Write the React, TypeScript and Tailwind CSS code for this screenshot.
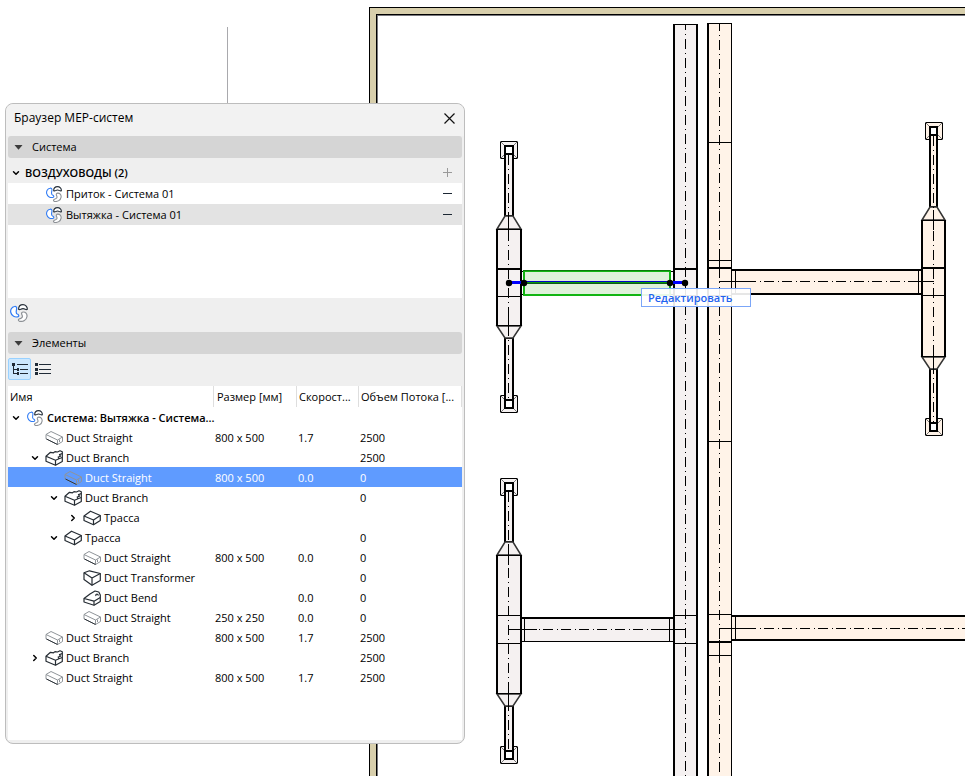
import React, { useState } from 'react';
import { ChevronDown, ChevronRight } from 'lucide-react';

type IconKind = 'fan' | 'straight' | 'branch' | 'route' | 'transformer' | 'bend';

interface TreeRow {
  id: number;
  level: number;
  icon: IconKind;
  name: string;
  state?: 'open' | 'closed';
  size?: string;
  speed?: string;
  flow?: string;
}

const rows: TreeRow[] = [
  { id: 1, level: 0, icon: 'fan', name: 'Система: Вытяжка - Система...', state: 'open' },
  { id: 2, level: 1, icon: 'straight', name: 'Duct Straight', size: '800 x 500', speed: '1.7', flow: '2500' },
  { id: 3, level: 1, icon: 'branch', name: 'Duct Branch', state: 'open', flow: '2500' },
  { id: 4, level: 2, icon: 'straight', name: 'Duct Straight', size: '800 x 500', speed: '0.0', flow: '0' },
  { id: 5, level: 2, icon: 'branch', name: 'Duct Branch', state: 'open', flow: '0' },
  { id: 6, level: 3, icon: 'route', name: 'Трасса', state: 'closed' },
  { id: 7, level: 2, icon: 'route', name: 'Трасса', state: 'open', flow: '0' },
  { id: 8, level: 3, icon: 'straight', name: 'Duct Straight', size: '800 x 500', speed: '0.0', flow: '0' },
  { id: 9, level: 3, icon: 'transformer', name: 'Duct Transformer', flow: '0' },
  { id: 10, level: 3, icon: 'bend', name: 'Duct Bend', speed: '0.0', flow: '0' },
  { id: 11, level: 3, icon: 'straight', name: 'Duct Straight', size: '250 x 250', speed: '0.0', flow: '0' },
  { id: 12, level: 1, icon: 'straight', name: 'Duct Straight', size: '800 x 500', speed: '1.7', flow: '2500' },
  { id: 13, level: 1, icon: 'branch', name: 'Duct Branch', state: 'closed', flow: '2500' },
  { id: 14, level: 1, icon: 'straight', name: 'Duct Straight', size: '800 x 500', speed: '1.7', flow: '2500' },
];

const indent = ['pl-[3px]', 'pl-[22px]', 'pl-[41px]', 'pl-[60px]'];

const FanIcon: React.FC<{ className?: string }> = ({ className = 'w-4 h-4' }) => (
  <svg viewBox="0 0 18 18" className={`shrink-0 ${className}`} fill="#fff" strokeWidth="1.2">
    <path stroke="#2f7bf5" d="M4.500 2.500C1.500 3 .2 6 .8 8.500C1.600 12 5 13.800 8.300 12.600C9.300 11.700 8.600 10.500 7.200 10C5 9 6.900 6 6.700 3.800C6.300 2.500 5.500 2.200 4.500 2.500Z" />
    <path stroke="#27303a" d="M8.600 5.300C8.600 2.200 10.500 .7 13 .7C15.600 .7 17.500 3 17.300 5.300C15.600 6.200 15.300 4.600 13 4.600C10.700 4.600 10.500 6.200 8.600 5.300Z" />
    <path stroke="#8d9196" d="M13 8C15.500 7.800 17.300 9.800 17 12.500C16.500 16 13 18 9.500 17.300C8 16.800 8 15.300 9.500 14.800C12 14.200 13 13 12 11C11.200 9.500 11.500 8.300 13 8Z" />
  </svg>
);

const DuctIcon: React.FC<{ kind: IconKind; selected: boolean }> = ({ kind, selected }) => {
  if (kind === 'fan') return <FanIcon className="w-[18px] h-4" />;
  if (kind === 'straight') {
    return (
      <svg viewBox="0 0 18 16" className="w-[18px] h-4 shrink-0" fill="none" stroke="#8f9499" strokeLinejoin="round">
        <path fill={selected ? 'none' : '#fff'} d="M1 4.500L6 1.500L17.500 7V11.500L12.500 14.500L1 8.800Z" />
        <path d="M1 4.500L12.500 10L17.500 7M12.500 10V14.500" />
        <path d="M14.500 9.500V12" />
        <path stroke="#30363c" d="M1.500 9L12.500 14.500" />
      </svg>
    );
  }
  return (
    <svg viewBox="0 0 18 16" className="w-[18px] h-4 shrink-0" fill="#fff" stroke="#252c33" strokeWidth="1.2" strokeLinejoin="round">
      {kind === 'route' && (
        <>
          <path d="M1 6L7.500 1.200L17.300 5.500V10.500L10.500 14.800L1 10.500Z" />
          <path fill="none" d="M1 6L10.500 10L17.300 5.500M10.500 10V14.800" />
        </>
      )}
      {kind === 'branch' && (
        <>
          <path d="M1 6.300L5.500 2.300L8.500 2.800L10 1.600L12.500 2L15 .8L17.300 1.800V11.500L10.500 15.200L1 11.200Z" />
          <path fill="none" d="M1 6.300L10.500 10.300V15.200M10.500 10.300L14 8.800L13.200 7L15.500 6.200L14.500 4.600L17.300 3.500M14 8.800L17.300 7.500" />
        </>
      )}
      {kind === 'transformer' && (
        <>
          <path d="M1 2.800L6.500 .8L17.300 3.500V10.500L9 15.300L1 9.500Z" />
          <path fill="none" d="M1 2.800L9 8L17.300 3.500M9 8V15.300" />
        </>
      )}
      {kind === 'bend' && (
        <>
          <path d="M1 8.500L7 4L12 1L15.800 2L17.300 5V11.500L11 15.200L1 12Z" />
          <path fill="none" d="M1 8.500L11 11.200L17.300 7.500M11 11.200V15.200M13 6C12.200 4 14.500 3.500 15.500 5.500" />
        </>
      )}
    </svg>
  );
};

interface SectionBarProps {
  title: string;
  open: boolean;
  onToggle: () => void;
}

const SectionBar: React.FC<SectionBarProps> = ({ title, open, onToggle }) => (
  <button
    onClick={onToggle}
    aria-expanded={open}
    className="flex h-[22px] w-full shrink-0 items-center gap-[9px] rounded-[3px] bg-[#d5d5d5] pl-[6px] text-left"
  >
    <svg viewBox="0 0 9 5" className={`h-[5px] w-[9px] ${open ? '' : '-rotate-90'}`} fill="#3c3c3c">
      <path d="M.5 0H8.500L4.500 4.800Z" />
    </svg>
    {title}
  </button>
);

/* Vertical tee body with two tapers, necks and square diffusers */
interface RiserProps {
  x: number;
  width?: number;
  fill: string;
  top: number;
  bottom: number;
  boxTop: number;
  boxBottom: number;
  upper: number;
  lower: number;
  boldUpper?: boolean;
}

const Diffuser: React.FC<{ x: number; y: number; fill: string }> = ({ x, y, fill }) => (
  <g>
    <rect x={x + 0.5} y={y + 0.5} width="17" height="17" fill={fill} stroke="#000" />
    <path d={`M${x} ${y}l18 18M${x + 18} ${y}l-18 18`} stroke="#777" shapeRendering="auto" />
  </g>
);

const Riser: React.FC<RiserProps> = ({ x, width = 24, fill, top, bottom, boxTop, boxBottom, upper, lower, boldUpper }) => {
  const right = x + 1 + width;
  const neck = width - 16;
  const span = width + 2;
  return (
    <g stroke="#000">
      <Diffuser x={x + 4} y={boxTop} fill={fill} />
      <Diffuser x={x + 4} y={boxBottom} fill={fill} />
      <rect x={x + 9} y={boxTop + 5} width={neck} height={top - boxTop - 18} fill={fill} strokeWidth="2" />
      <rect x={x + 9} y={bottom + 13} width={neck} height={boxBottom - bottom} fill={fill} strokeWidth="2" />
      <g fill={fill} stroke="#333" strokeWidth="1.5" shapeRendering="auto">
        <path d={`M${x + 1} ${top}L${x + 9} ${top - 13}H${x + 9 + neck}L${right} ${top}Z`} />
        <path d={`M${x + 1} ${bottom + 1}L${x + 9} ${bottom + 13}H${x + 9 + neck}L${right} ${bottom + 1}Z`} />
      </g>
      <rect x={x + 1} y={top} width={width} height={bottom - top + 1} fill={fill} stroke="none" />
      <path d={`M${x + 1} ${top}V${bottom + 1}M${right} ${top}V${bottom + 1}`} strokeWidth="2" />
      <path d={`M${x} ${top + 0.5}h${span}M${x} ${bottom + 0.5}h${span}M${x} ${lower + 0.5}h${span}`} />
      <path d={`M${x} ${boldUpper ? upper + 1 : upper + 0.5}h${span}`} strokeWidth={boldUpper ? 2 : 1} />
      <rect x={x + 9} y={boxTop + 5} width={neck} height="8" fill="#fff" strokeWidth="2" />
      <rect x={x + 9} y={boxBottom + 5} width={neck} height="8" fill="#fff" strokeWidth="2" />
      <path d={`M${x + 12.5} ${boxTop + 14}V${boxBottom + 4}`} strokeDasharray="10 4 1 4" />
      <path d={`M${x + 12.5} ${top - 10}v20M${x + 12.5} ${bottom - 10}v20`} />
    </g>
  );
};

const GREY = '#f5f1f1';
const PEACH = '#fff3e8';

const DuctPlan: React.FC = () => (
  <svg className="absolute inset-0 h-full w-full" shapeRendering="crispEdges" fill="none" stroke="#000">
    {/* Walls */}
    <g stroke="none">
      <rect x="369" y="7" width="3000" height="3000" fill="#000" />
      <rect x="370" y="8" width="3000" height="3000" fill="#d8cfac" />
      <rect x="376" y="14" width="3000" height="3000" fill="#000" />
      <rect x="377" y="15" width="3000" height="3000" fill="#77777c" />
      <rect x="378" y="16" width="3000" height="3000" fill="#fff" />
      <rect x="227" y="27" width="1" height="77" fill="#a9a9ad" />
    </g>

    {/* Supply and exhaust mains */}
    <rect x="674" y="24" width="23" height="3000" fill={GREY} stroke="none" />
    <path d="M674 24V3000M697 24V3000" strokeWidth="2" />
    <path d="M673 24.500h25M673 295.500h25M673 615.500h25M673 643.500h25" />
    <path d="M673 269h25" strokeWidth="2" />
    <path d="M685.500 25V3000" strokeDasharray="10 4 1 4" strokeDashoffset="5" />
    <rect x="708" y="23" width="23" height="3000" fill={PEACH} stroke="none" />
    <path d="M708 23V3000" strokeWidth="2" />
    <path d="M731.500 23V3000M707 23.500h25M707 142.500h25M707 260.500h25M707 295.500h25M707 441.500h25M707 614.500h25M707 655.500h25" />
    <path d="M707 268h25M707 642h25" strokeWidth="2" />
    <path d="M719.500 24V3000" strokeDasharray="10 4 1 4" strokeDashoffset="3" />
    <path d="M719.500 257v20M719.500 640v22" />

    <Riser x={496} fill={GREY} top={229} bottom={325} boxTop={141} boxBottom={395} upper={268} lower={296} boldUpper />
    <Riser x={496} fill={GREY} top={555} bottom={693} boxTop={478} boxBottom={746} upper={615} lower={643} />
    <Riser x={921} width={23} fill={PEACH} top={220} bottom={356} boxTop={122} boxBottom={418} upper={267} lower={295} boldUpper />

    {/* Cross runs */}
    <rect x="732" y="270" width="189" height="24" fill={PEACH} stroke="none" />
    <path d="M732 270h189M732 294h189" strokeWidth="2" />
    <path d="M735.500 270v24M918.500 270v24" />
    <path d="M719 281.500h214" strokeDasharray="10 4 1 3" strokeDashoffset="9" />
    <path d="M719 281.500h28M908 281.500h26" />
    <rect x="732" y="616" width="3000" height="24" fill={PEACH} stroke="none" />
    <path d="M732 616h3000M732 640h3000" strokeWidth="2" />
    <path d="M735.500 616v24" />
    <path d="M719 628.500h3000" strokeDasharray="10 4 1 3" strokeDashoffset="9" />
    <path d="M719 628.500h28" />
    <rect x="522" y="618" width="151" height="23" fill={GREY} stroke="none" />
    <path d="M522 618h151" strokeWidth="2" />
    <path d="M522 641.500h151M524.500 618v24M669.500 618v24" />
    <path d="M508 629.500h177" strokeDasharray="10 4 1 3" strokeDashoffset="1" />
    <path d="M508 629.500h29M659 629.500h26" />

    {/* Selected run */}
    <path d="M522 271h151M522 294.500h151" />
    <rect x="524" y="271" width="146" height="24" fill="#dff1da" stroke="#12b512" strokeWidth="2" />
    <path d="M523 270.500h147" stroke="#0a7a0a" />
    <path d="M509 282.500h14M671 282.500h14" stroke="#0000ff" strokeWidth="3" />
    <path d="M524 281.500h146" stroke="#0000c8" />
    <path d="M524 282.500h146" stroke="#089a08" />
    <path d="M524 283.500h146" stroke="#0b5a1c" />
    <g fill="#000" stroke="none" shapeRendering="auto">
      <circle cx="509" cy="283" r="3.200" />
      <circle cx="524" cy="283" r="3.200" />
      <circle cx="670" cy="283" r="3.200" />
      <circle cx="685" cy="283" r="3.200" />
    </g>
  </svg>
);

const App: React.FC = () => {
  const [system, setSystem] = useState(1);
  const [selected, setSelected] = useState(4);
  const [systemsOpen, setSystemsOpen] = useState(true);
  const [elementsOpen, setElementsOpen] = useState(true);

  return (
    <main className="relative min-h-screen overflow-hidden bg-white font-['Open_Sans','Noto_Sans',sans-serif] text-[11px] leading-4 text-black">
      <DuctPlan />

      <div className="absolute left-[641px] top-[288px] flex h-[19px] w-[110px] items-center border border-[#7ba6f8] bg-white/90 pl-[6px] font-semibold text-[#1f63f0]">
        Редактировать
      </div>

      {/* Floating palette */}
      <section className="absolute left-[5px] top-[103px] flex h-[641px] w-[460px] flex-col rounded-lg border border-[#bdbdbd] bg-[#efefef] px-[2px] pb-[3px]">
        <header className="-mx-[2px] flex h-8 shrink-0 items-center justify-between rounded-t-lg bg-[#f2f2f2] pb-1 pl-2 pr-[9px]">
          <h1 className="text-[12px]">Браузер MEP-систем</h1>
          <button aria-label="Закрыть">
            <svg viewBox="0 0 11 11" className="h-[11px] w-[11px]" stroke="#111" strokeWidth="1.2">
              <path d="M.5 .5L10.500 10.500M10.500 .5L.5 10.500" />
            </svg>
          </button>
        </header>

        <SectionBar title="Система" open={systemsOpen} onToggle={() => setSystemsOpen(!systemsOpen)} />
        {systemsOpen && (
          <>
            <div className="flex h-[25px] shrink-0 items-center justify-between pl-[3px] pr-[10px] pt-1">
              <div className="flex items-center gap-1 font-semibold">
                <ChevronDown className="h-[10px] w-[10px]" strokeWidth={3.5} />
                ВОЗДУХОВОДЫ (2)
              </div>
              <button aria-label="Добавить систему">
                <svg viewBox="0 0 9 9" className="h-[9px] w-[9px]" stroke="#999">
                  <path d="M0 4.500H9M4.500 0V9" />
                </svg>
              </button>
            </div>
            <ul className="min-h-[115px] shrink-0 bg-white">
              {['Приток - Система 01', 'Вытяжка - Система 01'].map((name, i) => (
                <li
                  key={name}
                  onClick={() => setSystem(i)}
                  className={`flex h-[21px] items-center gap-1 pl-[38px] pr-[10px] ${system === i ? 'bg-[#e3e3e3]' : ''}`}
                >
                  <FanIcon />
                  <span className="flex-1">{name}</span>
                  <button aria-label="Удалить" className="flex h-4 items-center">
                    <span className="block h-px w-[9px] bg-[#1c2733]" />
                  </button>
                </li>
              ))}
            </ul>
          </>
        )}
        <div className="flex h-[34px] shrink-0 items-center pb-1 pl-[2px]">
          <button aria-label="Показать систему">
            <FanIcon className="h-[18px] w-[18px]" />
          </button>
        </div>

        <SectionBar title="Элементы" open={elementsOpen} onToggle={() => setElementsOpen(!elementsOpen)} />
        {elementsOpen && (
          <>
            <div className="flex h-8 shrink-0 items-center gap-1 pb-[2px]">
              <button aria-label="Дерево" className="flex h-[22px] w-[23px] items-center justify-center rounded-[2px] border border-[#99d1ff] bg-[#cce8ff]">
                <svg viewBox="0 0 16 12" className="h-3 w-4" fill="none" stroke="#1f2a36" shapeRendering="crispEdges">
                  <path d="M0 1.500h3M1.500 1v9.500h4M1.500 6.500h4M5 1.500h11M8 6.500h8M8 10.500h8" />
                  <path d="M0 1.500h3M5 6.500h2M5 10.500h2" strokeWidth="3" />
                </svg>
              </button>
              <button aria-label="Список" className="flex h-[22px] items-center">
                <svg viewBox="0 0 16 12" className="h-3 w-4" fill="none" stroke="#1f2a36" shapeRendering="crispEdges">
                  <path d="M4 1.500h12M4 6.500h12M4 10.500h12" />
                  <path d="M0 1.500h3M0 6.500h3M0 10.500h3" strokeWidth="3" />
                </svg>
              </button>
            </div>
            <div className="flex-1 overflow-hidden bg-white">
              <table className="w-full table-fixed border-separate border-spacing-0">
                <colgroup>
                  <col className="w-[206px]" />
                  <col className="w-[83px]" />
                  <col className="w-[62px]" />
                  <col />
                </colgroup>
                <thead>
                  <tr className="h-[21px] text-left">
                    <th className="border-r border-[#dedede] p-0 pl-[2px] font-normal">Имя</th>
                    <th className="truncate border-r border-[#dedede] p-0 pl-[3px] font-normal">Размер [мм]</th>
                    <th className="truncate border-r border-[#dedede] p-0 pl-[2px] font-normal">Скорост...</th>
                    <th className="truncate border-r border-[#dedede] p-0 pl-[2px] font-normal">Объем Потока [...</th>
                  </tr>
                </thead>
                <tbody>
                  {rows.map((row) => (
                    <tr
                      key={row.id}
                      onClick={() => setSelected(row.id)}
                      className={`h-5 ${selected === row.id ? 'bg-[#5f9bff] text-white' : ''}`}
                    >
                      <td className="p-0 pt-[2px]">
                        <div className={`flex items-center whitespace-nowrap ${indent[row.level]} ${row.level === 0 ? 'font-semibold' : ''}`}>
                          <span className="mr-[5px] flex w-[10px] justify-center">
                            {row.state && (
                              <button aria-label={row.state === 'open' ? 'Свернуть' : 'Развернуть'}>
                                {row.state === 'open' ? (
                                  <ChevronDown className="h-[10px] w-[10px]" strokeWidth={3.5} />
                                ) : (
                                  <ChevronRight className="h-[10px] w-[10px]" strokeWidth={3.5} />
                                )}
                              </button>
                            )}
                          </span>
                          <DuctIcon kind={row.icon} selected={selected === row.id} />
                          <span className="ml-[3px]">{row.name}</span>
                        </div>
                      </td>
                      <td className="p-0 pl-px pt-[2px]">{row.size}</td>
                      <td className="p-0 pl-px pt-[2px]">{row.speed}</td>
                      <td className="p-0 pl-px pt-[2px]">{row.flow}</td>
                    </tr>
                  ))}
                </tbody>
              </table>
            </div>
          </>
        )}
      </section>
    </main>
  );
};

export default App;
